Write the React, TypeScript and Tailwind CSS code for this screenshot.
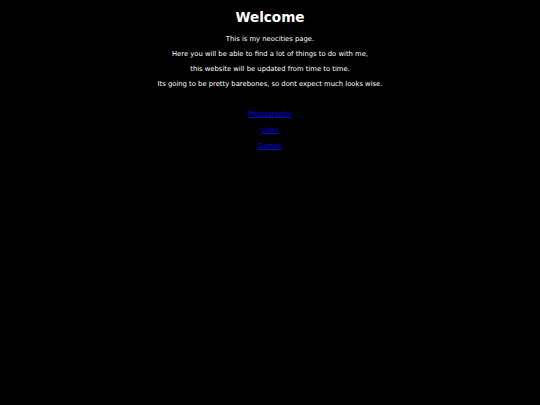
export default function App() {
  const lines = [
    'This is my neocities page.',
    'Here you will be able to find a lot of things to do with me,',
    'this website will be updated from time to time.',
    'Its going to be pretty barebones, so dont expect much looks wise.',
  ];
  const links = ['Photography', 'Links', 'Games'];

  return (
    <div className="min-h-[405px] bg-black text-center font-['DejaVu_Sans',sans-serif] text-white">
      <h1 className="pt-[8px] text-[13.6px] font-bold leading-[18px]">Welcome</h1>
      <div className="mt-[8px] flex flex-col gap-[5px] text-[6.8px] leading-[10px]">
        {lines.map((l) => (
          <p key={l}>{l}</p>
        ))}
      </div>
      <div className="mt-[20px] flex flex-col gap-[6px] text-[6.8px] leading-[10px]">
        {links.map((l) => (
          <p key={l}>
            <a href="#" className="text-[#0000ee] underline">
              {l}
            </a>
          </p>
        ))}
      </div>
    </div>
  );
}
